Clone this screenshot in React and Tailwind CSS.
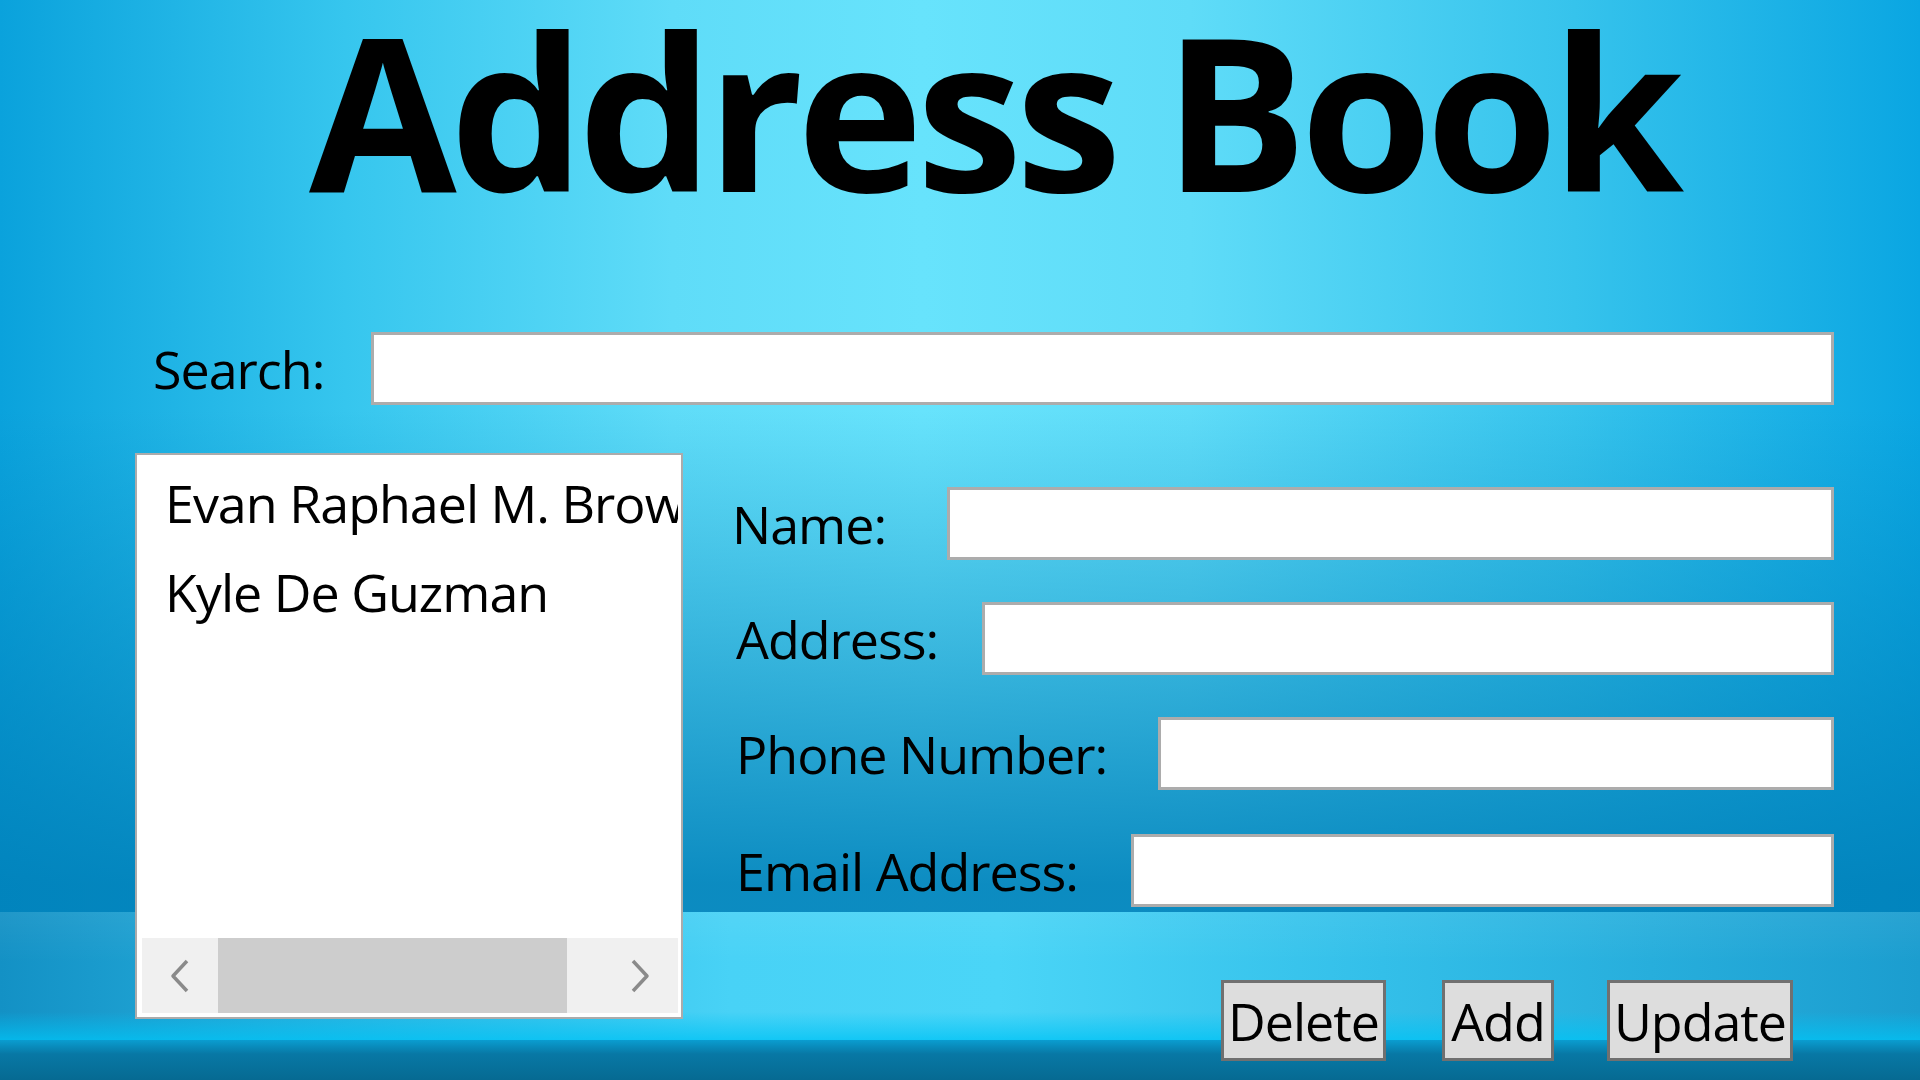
import { useState } from "react";

const contacts = ["Evan Raphael M. Brown", "Kyle De Guzman"];

export default function App() {
  const [selected, setSelected] = useState(null);

  return (
    <div className="w-full h-[1080px] overflow-hidden font-['Open_Sans','Noto_Sans',sans-serif] text-black bg-no-repeat bg-[image:linear-gradient(to_bottom,rgba(255,255,255,0.06)_0%,transparent_40%,transparent_78%,rgba(0,195,245,0.75)_100%),linear-gradient(to_right,#1391c5_0%,#2ab3e0_18%,#48d2f6_38%,#4ad5f7_52%,#33bfe9_72%,#1b9dcf_100%),linear-gradient(to_bottom,#0a9dd0_0%,#0878a5_35%,#066a92_100%),linear-gradient(to_bottom,transparent_0%,transparent_45%,rgba(0,128,185,0.88)_97%),linear-gradient(to_right,#0aa2dc_0%,#36c6ee_18%,#5fdcf8_35%,#67e3fc_48%,#5fdcf8_62%,#36c3ec_82%,#0aa6e2_100%)] bg-size-[100%_128px,100%_128px,100%_40px,100%_912px,100%_912px] bg-position-[0_912px,0_912px,0_1040px,0_0,0_0]">
      {/* title */}
      <h1 className="mt-[2px] pl-[66px] text-center text-[214px] leading-none font-bold tracking-[-7px]">
        Address Book
      </h1>

      {/* search */}
      <div className="mt-[116px] flex items-center pl-[153px]">
        <label className="w-[218px] text-[52px] tracking-[-1px] leading-none">Search:</label>
        <TextBox className="w-[1463px]" />
      </div>

      <div className="mt-[48px] flex">
        {/* list */}
        <div className="ml-[135px] w-[548px] h-[566px] bg-white border-2 border-[#ababab] pt-[3px] pl-[5px] pr-[3px] pb-[4px] flex flex-col">
          <div className="flex-1 overflow-hidden">
            {contacts.map((c, i) => (
              <div
                key={c}
                onClick={() => setSelected(i)}
                className={`h-[89px] leading-[89px] pl-[23px] whitespace-nowrap text-[52px] tracking-[-1px] ${
                  selected === i ? "bg-[#cce8ff]" : ""
                }`}
              >
                {c}
              </div>
            ))}
          </div>
          <div className="h-[75px] bg-[#f0f0f0] flex">
            <div className="w-[76px] flex items-center justify-center">
              <Chevron dir="left" />
            </div>
            <div className="w-[349px] bg-[#cdcdcd]" />
            <div className="flex-1" />
            <div className="w-[76px] flex items-center justify-center">
              <Chevron dir="right" />
            </div>
          </div>
        </div>

        {/* form */}
        <div className="ml-[49px] pt-[34px]">
          <FormRow label="Name:" labelW="w-[215px]" inputW="w-[887px]" />
          <FormRow label="Address:" labelW="w-[246px]" inputW="w-[852px]" className="mt-[42px] pl-[4px]" />
          <FormRow label="Phone Number:" labelW="w-[422px]" inputW="w-[676px]" className="mt-[42px] pl-[4px]" />
          <FormRow label="Email Address:" labelW="w-[395px]" inputW="w-[703px]" className="mt-[44px] pl-[4px]" />

          <div className="mt-[73px] flex pl-[489px]">
            <Button className="w-[165px]">Delete</Button>
            <Button className="ml-[56px] w-[112px]">Add</Button>
            <Button className="ml-[53px] w-[186px]">Update</Button>
          </div>
        </div>
      </div>
    </div>
  );
}

function TextBox({ className = "" }) {
  return (
    <input
      type="text"
      className={`h-[73px] bg-white border-[3px] border-[#acacac] px-2 text-[48px] outline-none ${className}`}
    />
  );
}

function FormRow({ label, labelW, inputW, className = "" }) {
  return (
    <div className={`flex items-center ${className}`}>
      <label className={`${labelW} text-[52px] tracking-[-1px] leading-none`}>{label}</label>
      <TextBox className={inputW} />
    </div>
  );
}

function Button({ children, className = "" }) {
  return (
    <button
      className={`h-[81px] bg-[#dddddd] border-[3px] border-[#707070] text-[52px] tracking-[-1px] leading-none flex items-center justify-center ${className}`}
    >
      {children}
    </button>
  );
}

function Chevron({ dir }) {
  return (
    <svg width="24" height="34" viewBox="0 0 24 34" fill="none">
      <polyline
        points={dir === "left" ? "19,2 5,17 19,32" : "5,2 19,17 5,32"}
        stroke="#8a8a8a"
        strokeWidth="3.5"
        strokeLinejoin="round"
      />
    </svg>
  );
}
